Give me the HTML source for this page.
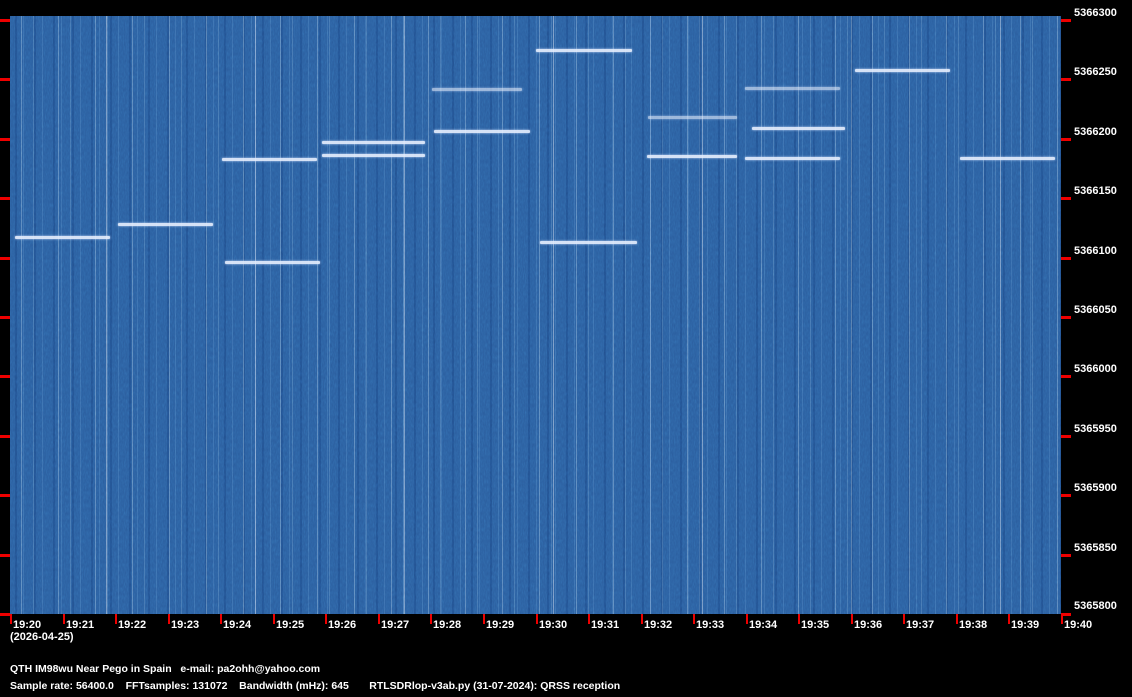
<!DOCTYPE html>
<html><head><style>
html,body{margin:0;padding:0;background:#000;width:1132px;height:697px;overflow:hidden;position:relative;font-family:"Liberation Sans",sans-serif;font-weight:bold;font-size:11px;color:#fff}
#sp{position:absolute;left:10px;top:16px;width:1051px;height:598px;background-color:#2b5e9f;
background-image:
repeating-linear-gradient(90deg,rgba(255,255,255,0) 0 11px,rgba(200,225,255,.3) 11px 12px,rgba(255,255,255,0) 12px 23px,rgba(170,205,245,.2) 23px 24px,rgba(255,255,255,0) 24px 37px),
repeating-linear-gradient(90deg,rgba(0,0,0,0) 0 5px,rgba(20,60,120,.35) 5px 7px,rgba(0,0,0,0) 7px 13px,rgba(120,170,230,.2) 13px 14px,rgba(0,0,0,0) 14px 19px),
repeating-linear-gradient(90deg,rgba(0,0,0,0) 0 96px,rgba(230,240,255,.4) 96px 97px,rgba(0,0,0,0) 97px 149px);}
#nz{position:absolute;left:10px;top:16px;opacity:.35;mix-blend-mode:overlay}
.tr{position:absolute;height:3px;background:#e8f0ff;border-radius:1px;box-shadow:0 0 2px #cfe0ff;opacity:.9}
.tk{position:absolute;background:#e00}
.yl{position:absolute;left:1074px}
.xl{position:absolute;top:619px}
.t{position:absolute;left:10px;white-space:pre}
</style></head><body>
<div id="sp"></div>
<svg id="nz" width="1051" height="598"><filter id="f"><feTurbulence type="fractalNoise" baseFrequency="0.9 0.25" numOctaves="2" seed="3"/><feColorMatrix type="saturate" values="0"/></filter><rect width="1051" height="598" filter="url(#f)"/></svg>
<div class="tr" style="left:15px;width:95px;top:236px"></div>
<div class="tr" style="left:118px;width:95px;top:223px"></div>
<div class="tr" style="left:222px;width:95px;top:158px"></div>
<div class="tr" style="left:225px;width:95px;top:261px"></div>
<div class="tr" style="left:322px;width:103px;top:141px"></div>
<div class="tr" style="left:322px;width:103px;top:154px"></div>
<div class="tr" style="left:432px;width:90px;top:88px;opacity:.6"></div>
<div class="tr" style="left:434px;width:96px;top:130px"></div>
<div class="tr" style="left:536px;width:96px;top:49px"></div>
<div class="tr" style="left:540px;width:97px;top:241px"></div>
<div class="tr" style="left:647px;width:90px;top:155px"></div>
<div class="tr" style="left:648px;width:89px;top:116px;opacity:.6"></div>
<div class="tr" style="left:745px;width:95px;top:87px;opacity:.6"></div>
<div class="tr" style="left:745px;width:95px;top:157px"></div>
<div class="tr" style="left:752px;width:93px;top:127px"></div>
<div class="tr" style="left:855px;width:95px;top:69px"></div>
<div class="tr" style="left:960px;width:95px;top:157px"></div>
<div id="ticks"></div>
<div class="t" style="top:631px">(2026-04-25)</div>
<div class="t" style="top:663px;font-size:10.5px">QTH IM98wu Near Pego in Spain   e-mail: pa2ohh@yahoo.com</div>
<div class="t" style="top:680px;font-size:10.5px">Sample rate: 56400.0    FFTsamples: 131072    Bandwidth (mHz): 645       RTLSDRlop-v3ab.py (31-07-2024): QRSS reception</div>
<script>
var h='';var labs=[5366300,5366250,5366200,5366150,5366100,5366050,5366000,5365950,5365900,5365850,5365800];
for(var i=0;i<11;i++){var y=Math.round(20+i*59.4);
h+='<div class="tk" style="left:0;top:'+(y-1)+'px;width:10px;height:3px"></div>';
h+='<div class="tk" style="left:1061px;top:'+(y-1)+'px;width:10px;height:3px"></div>';
h+='<div class="yl" style="top:'+(y-13+(i==10?-1:0))+'px">'+labs[i]+'</div>';}
for(var j=0;j<=20;j++){var x=Math.round(10+j*52.55);
h+='<div class="tk" style="left:'+x+'px;top:614px;width:2px;height:10px"></div>';
var m=20+j,hh=19;if(m>=60){m-=60;hh=20;}
h+='<div class="xl" style="left:'+(x+3)+'px">'+hh+':'+(m<10?'0':'')+m+'</div>';}
document.getElementById('ticks').innerHTML=h;
</script>
</body></html>
